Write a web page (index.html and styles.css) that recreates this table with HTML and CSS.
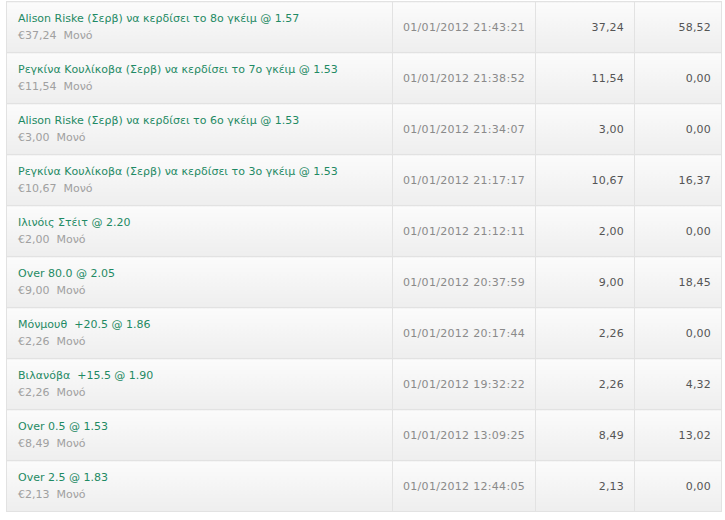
FILE: index.html
```html
<!DOCTYPE html>
<html lang="el">
<head>
    <meta charset="UTF-8">
    <title>Ιστορικό στοιχημάτων</title>
    <link rel="stylesheet" href="styles.css">
</head>
<body>
    <table class="bets">
        <tbody>
            <tr>
                <td class="bet"><span class="sel">Alison Riske (Σερβ) να κερδίσει το 8ο γκέιμ @ 1.57</span><span class="info">€37,24&nbsp; Μονό</span></td>
                <td class="date">01/01/2012 21:43:21</td>
                <td class="num">37,24</td>
                <td class="num">58,52</td>
            </tr>
            <tr>
                <td class="bet"><span class="sel">Ρεγκίνα Κουλίκοβα (Σερβ) να κερδίσει το 7ο γκέιμ @ 1.53</span><span class="info">€11,54&nbsp; Μονό</span></td>
                <td class="date">01/01/2012 21:38:52</td>
                <td class="num">11,54</td>
                <td class="num">0,00</td>
            </tr>
            <tr>
                <td class="bet"><span class="sel">Alison Riske (Σερβ) να κερδίσει το 6ο γκέιμ @ 1.53</span><span class="info">€3,00&nbsp; Μονό</span></td>
                <td class="date">01/01/2012 21:34:07</td>
                <td class="num">3,00</td>
                <td class="num">0,00</td>
            </tr>
            <tr>
                <td class="bet"><span class="sel">Ρεγκίνα Κουλίκοβα (Σερβ) να κερδίσει το 3ο γκέιμ @ 1.53</span><span class="info">€10,67&nbsp; Μονό</span></td>
                <td class="date">01/01/2012 21:17:17</td>
                <td class="num">10,67</td>
                <td class="num">16,37</td>
            </tr>
            <tr>
                <td class="bet"><span class="sel">Ιλινόις Στέιτ @ 2.20</span><span class="info">€2,00&nbsp; Μονό</span></td>
                <td class="date">01/01/2012 21:12:11</td>
                <td class="num">2,00</td>
                <td class="num">0,00</td>
            </tr>
            <tr>
                <td class="bet"><span class="sel">Over 80.0 @ 2.05</span><span class="info">€9,00&nbsp; Μονό</span></td>
                <td class="date">01/01/2012 20:37:59</td>
                <td class="num">9,00</td>
                <td class="num">18,45</td>
            </tr>
            <tr>
                <td class="bet"><span class="sel">Μόνμουθ&nbsp; +20.5 @ 1.86</span><span class="info">€2,26&nbsp; Μονό</span></td>
                <td class="date">01/01/2012 20:17:44</td>
                <td class="num">2,26</td>
                <td class="num">0,00</td>
            </tr>
            <tr>
                <td class="bet"><span class="sel">Βιλανόβα&nbsp; +15.5 @ 1.90</span><span class="info">€2,26&nbsp; Μονό</span></td>
                <td class="date">01/01/2012 19:32:22</td>
                <td class="num">2,26</td>
                <td class="num">4,32</td>
            </tr>
            <tr>
                <td class="bet"><span class="sel">Over 0.5 @ 1.53</span><span class="info">€8,49&nbsp; Μονό</span></td>
                <td class="date">01/01/2012 13:09:25</td>
                <td class="num">8,49</td>
                <td class="num">13,02</td>
            </tr>
            <tr>
                <td class="bet"><span class="sel">Over 2.5 @ 1.83</span><span class="info">€2,13&nbsp; Μονό</span></td>
                <td class="date">01/01/2012 12:44:05</td>
                <td class="num">2,13</td>
                <td class="num">0,00</td>
            </tr>
        </tbody>
    </table>
</body>
</html>
```
FILE: styles.css
```css
* { box-sizing: border-box; }
body {
    margin: 0;
    padding: 1px 4px 0 6px;
    background: #fff;
    font-family: 'DejaVu Sans', Verdana, sans-serif;
    font-size: 11px;
    color: #555;
}
.bets {
    width: 716px;
    border-collapse: collapse;
    table-layout: fixed;
}
.bets td {
    height: 51px;
    padding: 0 10px;
    border: 1px solid #e2e2e2;
    background: linear-gradient(to bottom, #fbfbfb, #eeeeee);
    vertical-align: middle;
}
.bets td:nth-child(1) { width: 386px; }
.bets td:nth-child(2) { width: 143px; }
.bets td:nth-child(3) { width: 99px; }
.bet {
    padding-left: 11px !important;
}
.sel {
    display: block;
    color: #1f8a64;
    line-height: 17px;
}
.info {
    display: block;
    color: #a0a0a0;
    line-height: 17px;
}
.date {
    color: #8a8a8a;
    padding-left: 10px !important;
    letter-spacing: 0.3px;
}
.num {
    text-align: right;
    color: #555;
    letter-spacing: 0.2px;
}
```
